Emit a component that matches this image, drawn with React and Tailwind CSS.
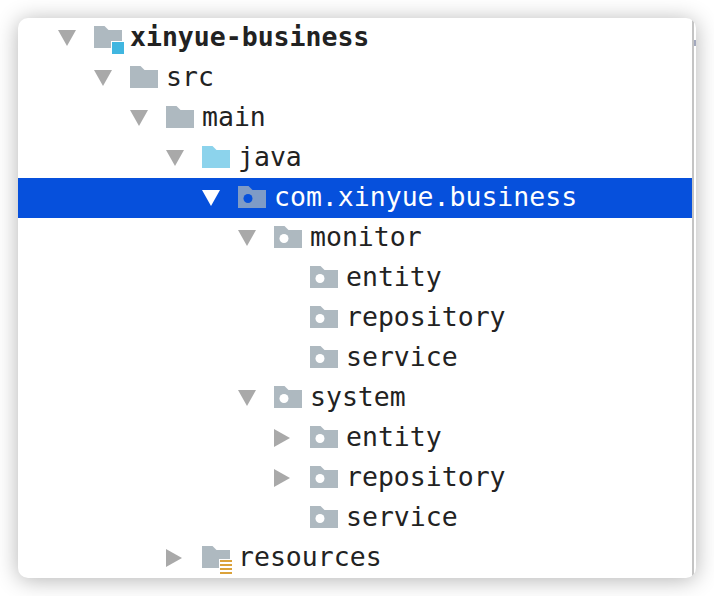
import React from 'react';

const rows = [
  { level: 0, arrow: 'down', icon: 'module', label: 'xinyue-business', bold: true },
  { level: 1, arrow: 'down', icon: 'folder', label: 'src' },
  { level: 2, arrow: 'down', icon: 'folder', label: 'main' },
  { level: 3, arrow: 'down', icon: 'source', label: 'java' },
  { level: 4, arrow: 'down', icon: 'package', label: 'com.xinyue.business', selected: true },
  { level: 5, arrow: 'down', icon: 'package', label: 'monitor' },
  { level: 6, icon: 'package', label: 'entity' },
  { level: 6, icon: 'package', label: 'repository' },
  { level: 6, icon: 'package', label: 'service' },
  { level: 5, arrow: 'down', icon: 'package', label: 'system' },
  { level: 6, arrow: 'right', icon: 'package', label: 'entity' },
  { level: 6, arrow: 'right', icon: 'package', label: 'repository' },
  { level: 6, icon: 'package', label: 'service' },
  { level: 3, arrow: 'right', icon: 'resources', label: 'resources' },
];

const FOLDER = 'M0 0H10.5L14.5 4H28V22H0Z';

const Arrow = ({ dir, selected }) => {
  const fill = selected ? '#ffffff' : '#a9a9a9';
  return (
    <svg width="18" height="18" viewBox="0 0 18 18" className="shrink-0">
      {dir === 'down' && <polygon points="0,1 18,1 9,17" fill={fill} />}
      {dir === 'right' && <polygon points="0,0 16,9 0,18" fill={fill} />}
    </svg>
  );
};

const Icon = ({ type, selected }) => {
  const body = selected ? '#7f9bc6' : type === 'source' ? '#8cd3ec' : '#aeb9c0';
  return (
    <svg width="28" height="22" viewBox="0 0 28 22" className="mb-[2px] shrink-0 overflow-visible">
      <path d={FOLDER} fill={body} />
      {type === 'package' && <circle cx="10" cy="12.5" r="4.5" fill={selected ? '#0650dc' : '#ffffff'} />}
      {type === 'module' && (
        <>
          <rect x="17" y="15" width="14" height="14" fill="#ffffff" />
          <rect x="18" y="16" width="12" height="12" fill="#40b6e0" />
        </>
      )}
      {type === 'resources' && (
        <>
          <rect x="17" y="13" width="14" height="16" fill="#ffffff" />
          <rect x="18" y="14" width="12" height="2" fill="#dba23a" />
          <rect x="18" y="18" width="12" height="2" fill="#dba23a" />
          <rect x="18" y="22" width="12" height="2" fill="#dba23a" />
          <rect x="18" y="26" width="12" height="2" fill="#dba23a" />
        </>
      )}
    </svg>
  );
};

const Row = ({ level, arrow, icon, label, bold, selected }) => (
  <div
    className={`flex h-10 items-center ${selected ? 'bg-[#0650dc] text-white' : 'text-[#222222]'} ${bold ? 'font-bold' : ''}`}
    style={{ paddingLeft: 40 + level * 36 }}
  >
    <div className="w-[36px] shrink-0">{arrow && <Arrow dir={arrow} selected={selected} />}</div>
    <Icon type={icon} selected={selected} />
    <span className="mb-[2px] ml-[8px] whitespace-pre">{label}</span>
  </div>
);

export default function App() {
  return (
    <div className="h-[596px] w-[714px] bg-white p-[18px] font-['DejaVu_Sans_Mono','Liberation_Mono',monospace] text-[26.5px] leading-10 antialiased">
      <div className="flex h-[560px] w-[678px] overflow-hidden rounded-[10px] bg-white shadow-[0_2px_22px_rgba(0,0,0,0.3)]">
        <div className="w-[674px] shrink-0">
          {rows.map((row, i) => (
            <Row key={i} {...row} />
          ))}
        </div>
        <div className="w-[2px] shrink-0 bg-[#c4c4c4]" />
        <div className="w-[2px] shrink-0 pt-[22px]">
          <div className="h-[6px] bg-[#a2a8bd]" />
        </div>
      </div>
    </div>
  );
}
